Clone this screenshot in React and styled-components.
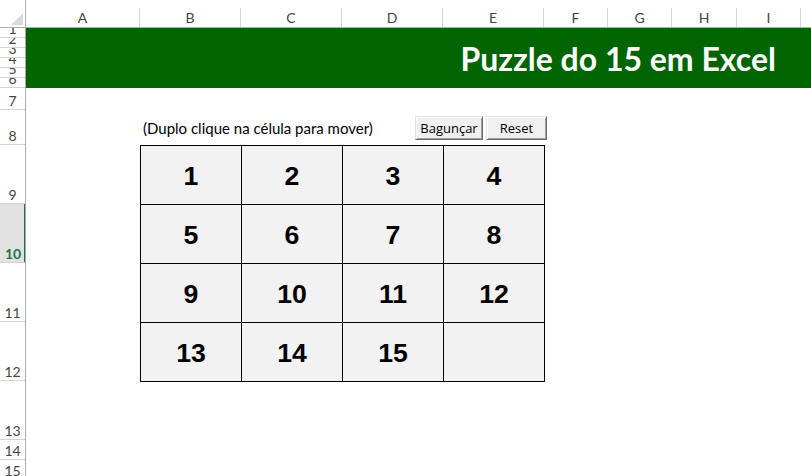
import { useState } from 'react';
import styled, { createGlobalStyle } from 'styled-components';

const GlobalStyle = createGlobalStyle`
  html, body {
    margin: 0;
    padding: 0;
    background: #fff;
    overflow: hidden;
  }
  body {
    font-family: Lato, "Liberation Sans", sans-serif;
  }
  * {
    box-sizing: border-box;
  }
`;

const COLUMNS = [
  { name: 'A', width: 114 },
  { name: 'B', width: 101 },
  { name: 'C', width: 101 },
  { name: 'D', width: 101 },
  { name: 'E', width: 101 },
  { name: 'F', width: 64 },
  { name: 'G', width: 64 },
  { name: 'H', width: 65 },
  { name: 'I', width: 64 },
  { name: 'J', width: 64 },
];

// the sheet grid only needs the columns up to I, the rest is filler
const SHEET_COLUMNS = COLUMNS.slice(0, 9);

const ROWS = [10, 10, 10, 10, 10, 10, 22, 35, 59, 59, 59, 59, 59, 20, 20, 20];
const SELECTED_ROW = 10;

const Window = styled.div`
  width: 811px;
  height: 476px;
  overflow: hidden;
  display: grid;
  grid-template-columns: 26px 785px;
  grid-template-rows: 28px 448px;
`;

const Corner = styled.div`
  border-right: 1px solid #ababab;
  border-bottom: 1px solid #ababab;
  display: flex;
  align-items: flex-end;
  justify-content: flex-end;
  padding: 0 2px 2px 0;
`;

const ColumnHeader = styled.div`
  display: flex;
  padding-top: 8px;
  border-bottom: 1px solid #ababab;
  overflow: hidden;
`;

const ColLabel = styled.div`
  flex: 0 0 ${(p) => p.$width}px;
  border-right: 1px solid #d4d4d4;
  display: flex;
  align-items: center;
  justify-content: center;
  font-size: 14px;
  color: #444;
`;

const RowHeader = styled.div`
  display: flex;
  flex-direction: column;
  border-right: 1px solid #ababab;
  overflow: hidden;
`;

const RowLabel = styled.div`
  flex: 0 0 ${(p) => p.$height}px;
  border-bottom: 1px solid #d4d4d4;
  display: flex;
  align-items: flex-end;
  justify-content: center;
  padding-bottom: 1px;
  overflow: hidden;
  font-size: 14px;
  line-height: 14px;
  color: ${(p) => (p.$selected ? '#217346' : '#444')};
  font-weight: ${(p) => (p.$selected ? 700 : 400)};
  background: ${(p) => (p.$selected ? '#e1e1e1' : 'transparent')};
  box-shadow: ${(p) => (p.$selected ? 'inset -2px 0 0 #217346' : 'none')};
  margin-right: ${(p) => (p.$selected ? '-1px' : '0')};
`;

const Sheet = styled.div`
  display: grid;
  grid-template-columns: ${SHEET_COLUMNS.map((c) => c.width + 'px').join(' ')} 1fr;
  grid-template-rows: ${ROWS.map((h) => h + 'px').join(' ')};
  overflow: hidden;
`;

const Banner = styled.div`
  grid-column: 1 / -1;
  grid-row: 1 / 7;
  background: #006400;
  display: flex;
  align-items: center;
  justify-content: flex-end;
  padding-right: 35px;
`;

const Title = styled.h1`
  margin: 0;
  color: #fff;
  font-family: Lato, "Open Sans", sans-serif;
  font-size: 32px;
  font-weight: 700;
  line-height: 1;
  padding-top: 2px;
  white-space: nowrap;
`;

const Hint = styled.div`
  grid-column: 2 / 5;
  grid-row: 8;
  align-self: end;
  padding: 0 0 8px 3px;
  font-size: 15px;
  color: #000;
  white-space: nowrap;
`;

const ButtonBar = styled.div`
  grid-column: 4 / 7;
  grid-row: 8;
  align-self: start;
  justify-self: start;
  display: flex;
  gap: 3px;
  margin: 6px 0 0 73px;
`;

const Button = styled.button`
  width: ${(p) => p.$width}px;
  height: 24px;
  padding: 0;
  background: #f0f0f0;
  border: 1px solid;
  border-color: #e3e3e3 #696969 #696969 #e3e3e3;
  box-shadow: inset 1px 1px 0 #fff, inset -1px -1px 0 #a0a0a0;
  font-family: "Open Sans", "Noto Sans", sans-serif;
  font-size: 13px;
  color: #000;
  cursor: pointer;
`;

const Puzzle = styled.div`
  grid-column: 2 / 6;
  grid-row: 9 / 13;
  align-self: start;
  justify-self: start;
  width: 405px;
  height: 237px;
  display: grid;
  grid-template-columns: repeat(4, 100px);
  grid-template-rows: repeat(4, 58px);
  gap: 1px;
  background: #000;
  border: 1px solid #000;
`;

const Tile = styled.div`
  background: #f2f2f2;
  display: flex;
  align-items: center;
  justify-content: center;
  padding-top: 2px;
  font-family: "Liberation Sans", Arial, sans-serif;
  font-size: 26.67px;
  font-weight: 700;
  color: #000;
  user-select: none;
`;

const START = [1, 2, 3, 4, 5, 6, 7, 8, 9, 10, 11, 12, 13, 14, 15, null];

const CornerMark = () => (
  <svg width="12" height="12" viewBox="0 0 12 12">
    <polygon points="12,0 12,12 0,12" fill="#dadada" />
  </svg>
);

const App = () => {
  const [tiles, setTiles] = useState(START);

  // troca a peça com o espaço vazio se forem vizinhos
  const move = (i) => {
    const empty = tiles.indexOf(null);
    const dr = Math.abs(Math.floor(i / 4) - Math.floor(empty / 4));
    const dc = Math.abs((i % 4) - (empty % 4));
    if (dr + dc !== 1) return;
    const next = [...tiles];
    next[empty] = tiles[i];
    next[i] = null;
    setTiles(next);
  };

  const shuffle = () => {
    let next = [...tiles];
    for (let k = 0; k < 200; k++) {
      const empty = next.indexOf(null);
      const options = [empty - 4, empty + 4, empty % 4 ? empty - 1 : -1, empty % 4 < 3 ? empty + 1 : -1].filter(
        (n) => n >= 0 && n < 16
      );
      const pick = options[Math.floor(Math.random() * options.length)];
      next[empty] = next[pick];
      next[pick] = null;
    }
    setTiles(next);
  };

  return (
    <>
      <GlobalStyle />
      <Window>
        <Corner>
          <CornerMark />
        </Corner>
        <ColumnHeader>
          {COLUMNS.map((c) => (
            <ColLabel key={c.name} $width={c.width}>
              {c.name}
            </ColLabel>
          ))}
        </ColumnHeader>
        <RowHeader>
          {ROWS.map((h, i) => (
            <RowLabel key={i} $height={h} $selected={i + 1 === SELECTED_ROW}>
              {i + 1}
            </RowLabel>
          ))}
        </RowHeader>
        <Sheet>
          <Banner>
            <Title>Puzzle do 15 em Excel</Title>
          </Banner>
          <Hint>(Duplo clique na célula para mover)</Hint>
          <ButtonBar>
            <Button $width={68} onClick={shuffle}>
              Bagunçar
            </Button>
            <Button $width={61} onClick={() => setTiles(START)}>
              Reset
            </Button>
          </ButtonBar>
          <Puzzle>
            {tiles.map((n, i) => (
              <Tile key={i} onDoubleClick={() => move(i)}>
                {n}
              </Tile>
            ))}
          </Puzzle>
        </Sheet>
      </Window>
    </>
  );
};

export default App;
